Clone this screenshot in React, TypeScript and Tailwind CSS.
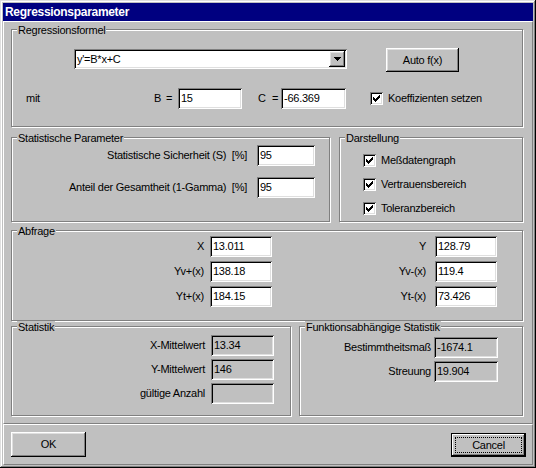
import React from "react";

const raised =
  "shadow-[inset_-1px_-1px_0_#000,inset_1px_1px_0_#fff,inset_-2px_-2px_0_#808080,inset_2px_2px_0_#dfdfdf]";
const sunken =
  "shadow-[inset_1px_1px_0_#808080,inset_-1px_-1px_0_#fff,inset_2px_2px_0_#000,inset_-2px_-2px_0_#dfdfdf]";

function Group({
  title,
  className,
  children,
}: {
  title: string;
  className: string;
  children?: React.ReactNode;
}) {
  return (
    <div
      className={`relative border border-[#808080] shadow-[inset_1px_1px_0_#fff,1px_1px_0_#fff] ${className}`}
    >
      <span className="absolute left-[5px] -top-[6px] bg-[#c0c0c0] px-[1px] leading-[13px] whitespace-nowrap">
        {title}
      </span>
      {children}
    </div>
  );
}

function Field({
  value,
  className,
  readOnly,
}: {
  value: string;
  className: string;
  readOnly?: boolean;
}) {
  return (
    <div
      className={`flex items-center h-[21px] pl-[3px] ${sunken} ${
        readOnly ? "bg-[#c0c0c0]" : "bg-white"
      } ${className}`}
    >
      {value}
    </div>
  );
}

function Check() {
  return (
    <div className={`w-[13px] h-[13px] shrink-0 bg-white ${sunken}`}>
      <svg width="13" height="13" viewBox="0 0 13 13" shapeRendering="crispEdges">
        <path
          fill="#000"
          d="M9 3h1v1h-1z M8 4h2v1h-2z M3 5h1v1h-1z M7 5h3v1h-3z M3 6h2v1h-2z M6 6h3v1h-3z M3 7h5v1h-5z M4 8h3v1h-3z M5 9h1v1h-1z"
        />
      </svg>
    </div>
  );
}

function Row({ label, children }: { label: string; children: React.ReactNode }) {
  return (
    <div className="flex items-center h-[21px]">
      <span className="whitespace-pre">{label}</span>
      {children}
    </div>
  );
}

export default function App() {
  return (
    <div className="w-[536px] h-[468px] p-[3px] flex flex-col bg-[#c0c0c0] text-black text-[11px] tracking-[-0.25px] font-['Liberation_Sans',Arial,sans-serif] shadow-[inset_-1px_-1px_0_#000,inset_1px_1px_0_#dfdfdf,inset_-2px_-2px_0_#808080,inset_2px_2px_0_#fff] select-none">
      {/* Title bar */}
      <div className="h-[18px] flex items-center pl-[2px] bg-[#000080] text-white text-[12px] font-bold tracking-[-0.3px]">
        Regressionsparameter
      </div>

      {/* Content */}
      <div className="h-[403px] border border-t-white border-l-white border-r-[#808080] border-b-[#808080] pl-[7px] pt-[7px]">
        {/* Regressionsformel */}
        <Group title="Regressionsformel" className="w-[512px] h-[98px]">
          <div className="flex items-start pl-[62px] pt-[18px]">
            <div className={`flex items-center justify-between mt-[1px] w-[273px] h-[20px] bg-white pl-[3px] pr-[2px] ${sunken}`}>
              <span>y'=B*x+C</span>
              <div className={`w-[16px] h-[16px] bg-[#c0c0c0] ${raised}`}>
                <svg width="16" height="16" viewBox="0 0 16 16" shapeRendering="crispEdges">
                  <path fill="#000" d="M5 6h7v1h-7z M6 7h5v1h-5z M7 8h3v1h-3z M8 9h1v1h-1z" />
                </svg>
              </div>
            </div>
            <div className={`ml-[39px] w-[73px] h-[24px] flex items-center justify-center bg-[#c0c0c0] ${raised}`}>
              Auto f(x)
            </div>
          </div>
          <div className="flex items-center h-[21px] mt-[16px]">
            <span className="w-[142px] pl-[14px]">mit</span>
            <span className="w-[12px]">B</span>
            <span className="w-[12px]">=</span>
            <Field value="15" className="w-[64px]" />
            <span className="w-[14px] ml-[16px]">C</span>
            <span className="w-[9px]">=</span>
            <Field value="-66.369" className="w-[65px]" />
            <div className="ml-[24px]">
              <Check />
            </div>
            <span className="ml-[5px]">Koeffizienten setzen</span>
          </div>
        </Group>

        <div className="flex mt-[10px]">
          {/* Statistische Parameter */}
          <Group title="Statistische Parameter" className="w-[319px] h-[85px]">
            <div className="flex flex-col items-end gap-[11px] pt-[7px] pr-[14px]">
              <Row label="Statistische Sicherheit (S)  [%]">
                <Field value="95" className="w-[58px] ml-[10px]" />
              </Row>
              <Row label="Anteil der Gesamtheit (1-Gamma)  [%]">
                <Field value="95" className="w-[58px] ml-[10px]" />
              </Row>
            </div>
          </Group>

          {/* Darstellung */}
          <Group title="Darstellung" className="w-[184px] h-[85px] ml-[9px]">
            <div className="flex flex-col gap-[11px] pl-[23px] pt-[16px]">
              {["Meßdatengraph", "Vertrauensbereich", "Toleranzbereich"].map((t) => (
                <div key={t} className="flex items-center h-[13px]">
                  <Check />
                  <span className="ml-[5px]">{t}</span>
                </div>
              ))}
            </div>
          </Group>
        </div>

        {/* Abfrage */}
        <Group title="Abfrage" className="w-[512px] h-[91px] mt-[8px]">
          <div className="flex pt-[5px]">
            <div className="w-[260px] flex flex-col items-end gap-[4px]">
              <Row label="X">
                <Field value="13.011" className="w-[62px] ml-[6px]" />
              </Row>
              <Row label="Yv+(x)">
                <Field value="138.18" className="w-[62px] ml-[6px]" />
              </Row>
              <Row label="Yt+(x)">
                <Field value="184.15" className="w-[62px] ml-[6px]" />
              </Row>
            </div>
            <div className="w-[225px] flex flex-col items-end gap-[4px]">
              <Row label="Y">
                <Field value="128.79" className="w-[62px] ml-[9px]" />
              </Row>
              <Row label="Yv-(x)">
                <Field value="119.4" className="w-[62px] ml-[9px]" />
              </Row>
              <Row label="Yt-(x)">
                <Field value="73.426" className="w-[62px] ml-[9px]" />
              </Row>
            </div>
          </div>
        </Group>

        <div className="flex mt-[5px]">
          {/* Statistik */}
          <Group title="Statistik" className="w-[280px] h-[90px]">
            <div className="flex flex-col items-end gap-[3px] pt-[8px] pr-[16px]">
              <Row label="X-Mittelwert">
                <Field value="13.34" readOnly className="w-[63px] ml-[6px]" />
              </Row>
              <Row label="Y-Mittelwert">
                <Field value="146" readOnly className="w-[63px] ml-[6px]" />
              </Row>
              <Row label="gültige Anzahl">
                <Field value="" readOnly className="w-[63px] ml-[6px]" />
              </Row>
            </div>
          </Group>

          {/* Funktionsabhängige Statistik */}
          <Group title="Funktionsabhängige Statistik" className="w-[224px] h-[90px] ml-[8px]">
            <div className="flex flex-col items-end gap-[3px] pt-[10px] pr-[24px]">
              <Row label="Bestimmtheitsmaß">
                <Field value="-1674.1" readOnly className="w-[64px] ml-[3px]" />
              </Row>
              <Row label="Streuung">
                <Field value="19.904" readOnly className="w-[64px] ml-[3px]" />
              </Row>
            </div>
          </Group>
        </div>
      </div>

      {/* Buttons */}
      <div className="h-[41px] flex justify-between items-start border border-t-white border-l-white border-r-[#808080] border-b-[#808080] pl-[7px] pr-[6px] pt-[7px]">
        <div className={`w-[75px] h-[25px] flex items-center justify-center bg-[#c0c0c0] ${raised}`}>
          OK
        </div>
        <div className="mt-[1px] w-[75px] h-[24px] p-[4px] bg-[#c0c0c0] shadow-[inset_0_0_0_1px_#000,inset_-2px_-2px_0_#000,inset_2px_2px_0_#fff,inset_-3px_-3px_0_#808080]">
          <div className="w-full h-full flex items-center justify-center border border-dotted border-black">
            Cancel
          </div>
        </div>
      </div>
    </div>
  );
}
